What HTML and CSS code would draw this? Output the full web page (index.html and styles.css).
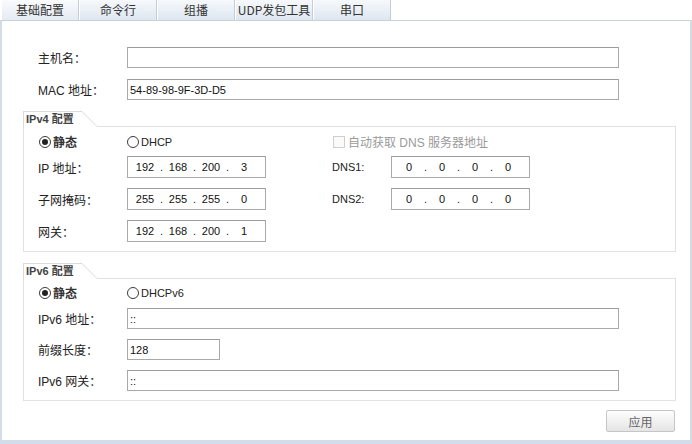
FILE: index.html
```html
<!DOCTYPE html>
<html>
<head>
<meta charset="utf-8">
<link rel="stylesheet" href="styles.css">
</head>
<body>
<div class="tabs">
  <div class="tab active">基础配置</div>
  <div class="tab">命令行</div>
  <div class="tab">组播</div>
  <div class="tab">UDP发包工具</div>
  <div class="tab">串口</div>
</div>
<div class="panel">
  <div class="row top-first">
    <span class="label">主机名：</span>
    <input class="text wide" type="text" value="">
  </div>
  <div class="row top-next">
    <span class="label">MAC 地址：</span>
    <input class="text wide" type="text" value="54-89-98-9F-3D-D5">
  </div>

  <div class="group">
    <div class="group-head">
      <span class="legend">IPv4 配置</span>
      <svg class="slant" width="15" height="16" viewBox="0 0 15 16"><line x1="0" y1="0.5" x2="15" y2="15.5" stroke="#d9d9d9" stroke-width="1"/></svg>
      <span class="head-line"></span>
    </div>
    <div class="group-body v4">
      <div class="opt-row">
        <span class="opt c1"><span class="radio checked"></span><span class="opt-text cjk">静态</span></span>
        <span class="opt c2"><span class="radio"></span><span class="opt-text">DHCP</span></span>
        <span class="opt disabled"><span class="check"></span><span class="opt-text">自动获取 DNS 服务器地址</span></span>
      </div>
      <div class="frow">
        <span class="label">IP 地址：</span>
        <div class="ip"><span class="seg">192</span><span class="dot">.</span><span class="seg">168</span><span class="dot">.</span><span class="seg">200</span><span class="dot">.</span><span class="seg">3</span></div>
        <span class="label2">DNS1:</span>
        <div class="ip"><span class="seg">0</span><span class="dot">.</span><span class="seg">0</span><span class="dot">.</span><span class="seg">0</span><span class="dot">.</span><span class="seg">0</span></div>
      </div>
      <div class="frow">
        <span class="label">子网掩码：</span>
        <div class="ip"><span class="seg">255</span><span class="dot">.</span><span class="seg">255</span><span class="dot">.</span><span class="seg">255</span><span class="dot">.</span><span class="seg">0</span></div>
        <span class="label2">DNS2:</span>
        <div class="ip"><span class="seg">0</span><span class="dot">.</span><span class="seg">0</span><span class="dot">.</span><span class="seg">0</span><span class="dot">.</span><span class="seg">0</span></div>
      </div>
      <div class="frow">
        <span class="label">网关：</span>
        <div class="ip"><span class="seg">192</span><span class="dot">.</span><span class="seg">168</span><span class="dot">.</span><span class="seg">200</span><span class="dot">.</span><span class="seg">1</span></div>
      </div>
    </div>
  </div>

  <div class="group">
    <div class="group-head">
      <span class="legend">IPv6 配置</span>
      <svg class="slant" width="15" height="16" viewBox="0 0 15 16"><line x1="0" y1="0.5" x2="15" y2="15.5" stroke="#d9d9d9" stroke-width="1"/></svg>
      <span class="head-line"></span>
    </div>
    <div class="group-body v6">
      <div class="opt-row">
        <span class="opt c1"><span class="radio checked"></span><span class="opt-text cjk">静态</span></span>
        <span class="opt c2"><span class="radio"></span><span class="opt-text">DHCPv6</span></span>
      </div>
      <div class="frow">
        <span class="label">IPv6 地址：</span>
        <input class="text wide" type="text" value="::">
      </div>
      <div class="frow">
        <span class="label">前缀长度：</span>
        <input class="text short" type="text" value="128">
      </div>
      <div class="frow">
        <span class="label">IPv6 网关：</span>
        <input class="text wide" type="text" value="::">
      </div>
    </div>
  </div>

  <div class="actions">
    <button class="apply" type="button">应用</button>
  </div>
</div>
</body>
</html>
```

FILE: styles.css
```css
* {
  box-sizing: border-box;
}

html, body {
  margin: 0;
  padding: 0;
}

body {
  width: 692px;
  height: 444px;
  overflow: hidden;
  background: #ffffff;
  font-family: "Liberation Sans", "Noto Sans CJK SC", sans-serif;
  font-size: 12px;
  color: #222222;
}

.tabs {
  display: flex;
  height: 20px;
  padding-left: 1px;
}

.tab {
  width: 78px;
  height: 20px;
  line-height: 20px;
  text-align: center;
  color: #333333;
  border-left: 1px solid #ffffff;
  border-right: 1px solid #c3cdd9;
  background: linear-gradient(#f6f9fc, #dde6ef);
  font-family: "Noto Sans CJK SC", sans-serif;
  font-size: 12px;
}

.tab.active {
  background: linear-gradient(#f9fbfd, #e4ebf2);
}

.panel {
  width: 692px;
  height: 424px;
  border-top: 1px solid #c9d1dc;
  border-left: 2px solid #d5dce7;
  border-right: 2px solid #d5dce7;
  border-bottom: 4px solid #d3dcea;
  padding-top: 26px;
}

.row {
  display: flex;
  align-items: center;
  padding-left: 36px;
}

.top-next {
  margin-top: 11px;
}

.label {
  width: 89px;
  flex: none;
  font-family: "Liberation Sans", "Noto Sans CJK SC", sans-serif;
  font-size: 12px;
  color: #222222;
}

.label2 {
  width: 59px;
  flex: none;
  margin-left: 66px;
  font-size: 11px;
  color: #222222;
}

.text {
  height: 21px;
  border: 1px solid #a9a9a9;
  border-top-color: #9c9c9c;
  padding: 0 2px;
  margin: 0;
  font-family: "Liberation Sans", sans-serif;
  font-size: 11px;
  color: #111111;
  background: #ffffff;
  outline: none;
}

.wide {
  width: 492px;
}

.short {
  width: 93px;
}

.group {
  margin: 11px 14px 0 21px;
}

.group-head {
  display: flex;
  height: 16px;
}

.legend {
  width: 59px;
  flex: none;
  border-top: 1px solid #d9d9d9;
  border-left: 1px solid #d9d9d9;
  padding-left: 2px;
  font-size: 11px;
  line-height: 15px;
  font-weight: bold;
  color: #444444;
  font-family: "Liberation Sans", "Noto Sans CJK SC", sans-serif;
}

.slant {
  flex: none;
  display: block;
}

.head-line {
  flex: 1;
  border-bottom: 1px solid #e2e2e2;
}

.group-body {
  border: 1px solid #e2e2e2;
  border-top: none;
  padding-left: 14px;
}

.group-body.v4 {
  padding-top: 7px;
  padding-bottom: 9px;
}

.group-body.v6 {
  padding-top: 6px;
  padding-bottom: 9px;
}

.opt-row {
  display: flex;
  align-items: center;
  height: 15px;
  margin-bottom: 7px;
}

.v6 .opt-row {
  margin-bottom: 8px;
}

.opt {
  display: flex;
  align-items: center;
}

.opt.c1 {
  width: 89px;
  padding-left: 1px;
}

.opt.c2 {
  width: 206px;
}

.radio {
  width: 12px;
  height: 12px;
  border: 1px solid #3a3a3a;
  border-radius: 50%;
  display: flex;
  align-items: center;
  justify-content: center;
  background: #ffffff;
  margin-right: 2px;
}

.radio.checked::after {
  content: "";
  width: 6px;
  height: 6px;
  border-radius: 50%;
  background: #222222;
}

.opt-text {
  font-size: 11px;
  color: #222222;
}

.opt-text.cjk {
  font-size: 12px;
  font-weight: bold;
  color: #333333;
}

.check {
  width: 12px;
  height: 12px;
  border: 1px solid #cfcfcf;
  background: #fafafa;
  margin-right: 3px;
}

.disabled .opt-text {
  color: #9a9a9a;
  font-size: 12px;
}

.frow {
  display: flex;
  align-items: center;
}

.frow + .frow {
  margin-top: 10px;
}

.ip {
  width: 139px;
  height: 22px;
  flex: none;
  display: flex;
  align-items: center;
  padding-left: 4px;
  border: 1px solid #a9a9a9;
  border-top-color: #9c9c9c;
  font-size: 11px;
  color: #111111;
}

.seg {
  width: 26px;
  text-align: center;
}

.dot {
  width: 7px;
  text-align: center;
}

.actions {
  display: flex;
  justify-content: flex-end;
  padding-right: 15px;
  margin-top: 9px;
}

.apply {
  width: 69px;
  height: 22px;
  border: 1px solid #c6c6c6;
  border-radius: 2px;
  background: linear-gradient(#fdfdfd, #e5e5e5);
  color: #666666;
  font-family: "Noto Sans CJK SC", sans-serif;
  font-size: 12px;
  padding: 0;
}
```
